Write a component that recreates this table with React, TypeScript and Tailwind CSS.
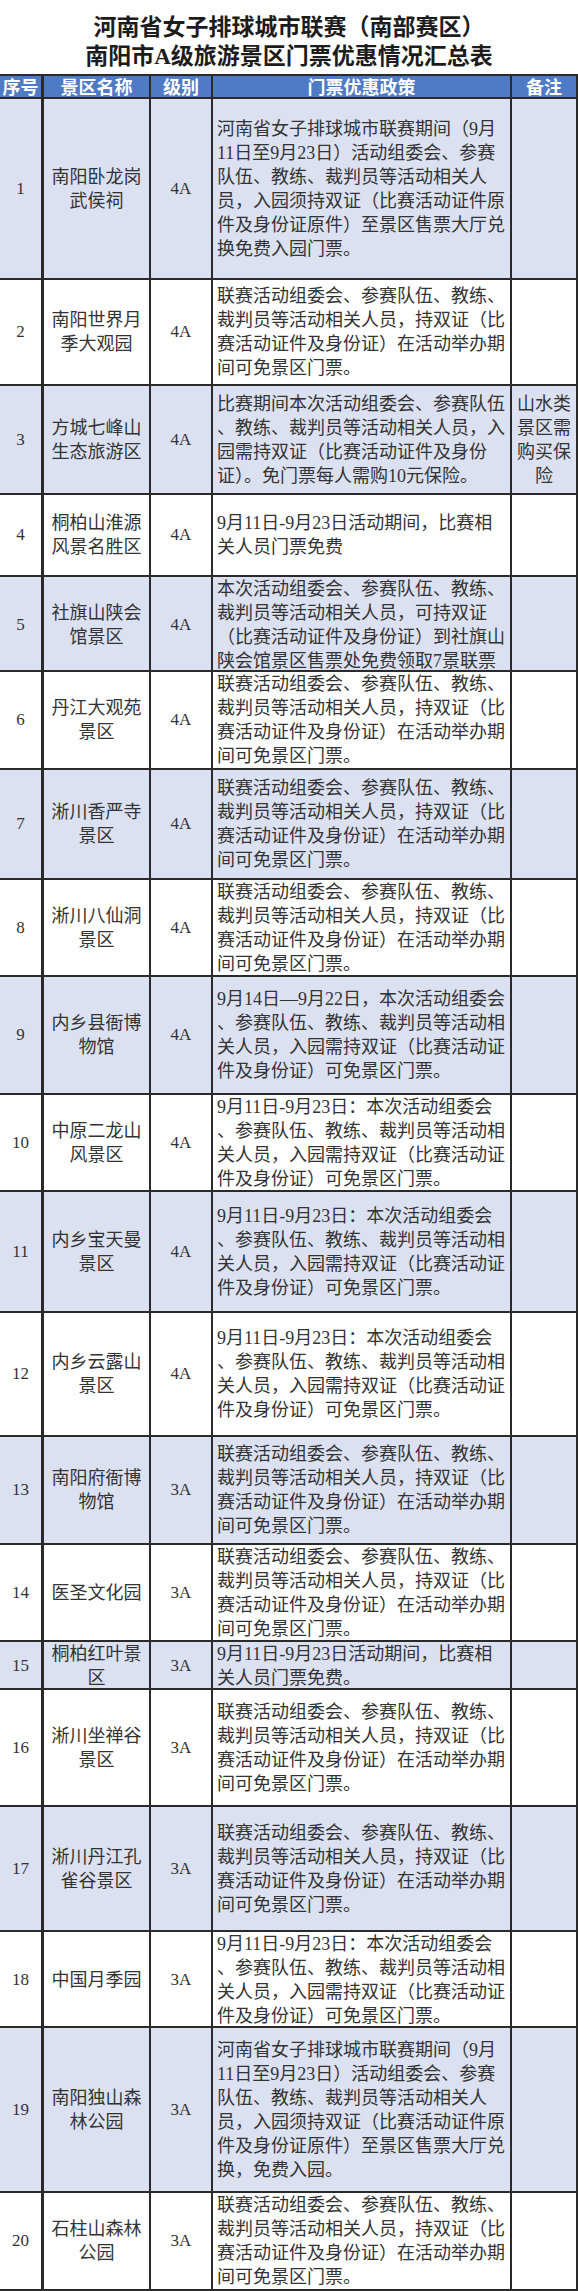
import React from 'react';

type Row = {
  no: number;
  name: string[];
  level: string;
  policy: string[];
  note?: string[];
  h: number;
};

const STD = [
  '联赛活动组委会、参赛队伍、教练、',
  '裁判员等活动相关人员，持双证（比',
  '赛活动证件及身份证）在活动举办期',
  '间可免景区门票。',
];

const D1123 = [
  '9月11日-9月23日：本次活动组委会',
  '、参赛队伍、教练、裁判员等活动相',
  '关人员，入园需持双证（比赛活动证',
  '件及身份证）可免景区门票。',
];

const LEAGUE = [
  '河南省女子排球城市联赛期间（9月',
  '11日至9月23日）活动组委会、参赛',
  '队伍、教练、裁判员等活动相关人',
  '员，入园须持双证（比赛活动证件原',
  '件及身份证原件）至景区售票大厅兑',
];

const rows: Row[] = [
  { no: 1, name: ['南阳卧龙岗', '武侯祠'], level: '4A', policy: [...LEAGUE, '换免费入园门票。'], h: 181 },
  { no: 2, name: ['南阳世界月', '季大观园'], level: '4A', policy: STD, h: 106 },
  {
    no: 3,
    name: ['方城七峰山', '生态旅游区'],
    level: '4A',
    policy: [
      '比赛期间本次活动组委会、参赛队伍',
      '、教练、裁判员等活动相关人员，入',
      '园需持双证（比赛活动证件及身份',
      '证）。免门票每人需购10元保险。',
    ],
    note: ['山水类', '景区需', '购买保', '险'],
    h: 109,
  },
  { no: 4, name: ['桐柏山淮源', '风景名胜区'], level: '4A', policy: ['9月11日-9月23日活动期间，比赛相', '关人员门票免费'], h: 82 },
  {
    no: 5,
    name: ['社旗山陕会', '馆景区'],
    level: '4A',
    policy: [
      '本次活动组委会、参赛队伍、教练、',
      '裁判员等活动相关人员，可持双证',
      '（比赛活动证件及身份证）到社旗山',
      '陕会馆景区售票处免费领取7景联票',
    ],
    h: 95,
  },
  { no: 6, name: ['丹江大观苑', '景区'], level: '4A', policy: STD, h: 98 },
  { no: 7, name: ['淅川香严寺', '景区'], level: '4A', policy: STD, h: 110 },
  { no: 8, name: ['淅川八仙洞', '景区'], level: '4A', policy: STD, h: 97 },
  {
    no: 9,
    name: ['内乡县衙博', '物馆'],
    level: '4A',
    policy: [
      '9月14日—9月22日，本次活动组委会',
      '、参赛队伍、教练、裁判员等活动相',
      '关人员，入园需持双证（比赛活动证',
      '件及身份证）可免景区门票。',
    ],
    h: 118,
  },
  { no: 10, name: ['中原二龙山', '风景区'], level: '4A', policy: D1123, h: 97 },
  { no: 11, name: ['内乡宝天曼', '景区'], level: '4A', policy: D1123, h: 121 },
  { no: 12, name: ['内乡云露山', '景区'], level: '4A', policy: D1123, h: 124 },
  { no: 13, name: ['南阳府衙博', '物馆'], level: '3A', policy: STD, h: 108 },
  { no: 14, name: ['医圣文化园'], level: '3A', policy: STD, h: 97 },
  { no: 15, name: ['桐柏红叶景', '区'], level: '3A', policy: ['9月11日-9月23日活动期间，比赛相', '关人员门票免费。'], h: 48 },
  { no: 16, name: ['淅川坐禅谷', '景区'], level: '3A', policy: STD, h: 117 },
  { no: 17, name: ['淅川丹江孔', '雀谷景区'], level: '3A', policy: STD, h: 125 },
  { no: 18, name: ['中国月季园'], level: '3A', policy: D1123, h: 96 },
  { no: 19, name: ['南阳独山森', '林公园'], level: '3A', policy: [...LEAGUE, '换，免费入园。'], h: 165 },
  { no: 20, name: ['石柱山森林', '公园'], level: '3A', policy: STD, h: 98 },
];

const font = "font-['Liberation_Serif','Noto_Sans_CJK_SC',serif]";
const cols = 'grid grid-cols-[44px_107px_62px_299px_66px]';
const cell = 'flex flex-col justify-center border-r-2 border-[#2a2a2a]';

function Lines({ lines, center }: { lines: string[]; center?: boolean }) {
  return (
    <>
      {lines.map((l, i) => (
        <div key={i} className={`whitespace-nowrap ${center ? 'text-center' : 'text-left'}`}>
          {l}
        </div>
      ))}
    </>
  );
}

export default function App() {
  return (
    <div className="w-[578px] bg-white">
      <div className={`h-[74px] pt-[13px] text-center ${font} text-[23px] leading-[29px] font-bold text-[#1c1c1c]`}>
        <div>河南省女子排球城市联赛（南部赛区）</div>
        <div>南阳市A级旅游景区门票优惠情况汇总表</div>
      </div>

      <div className={`${cols} h-[25px] border-y-2 border-[#2a2a2a] bg-[#4f7ac6] font-['Noto_Sans_CJK_SC',sans-serif] text-[18px] leading-[21px] font-bold text-white`}>
        <div className={`${cell} items-center border-r-[3px]`}>序号</div>
        <div className={`${cell} items-center`}>景区名称</div>
        <div className={`${cell} items-center`}>级别</div>
        <div className={`${cell} items-center`}>门票优惠政策</div>
        <div className={`${cell} items-center`}>备注</div>
      </div>

      {rows.map((r) => (
        <div
          key={r.no}
          style={{ height: r.h }}
          className={`${cols} border-b-2 border-[#2a2a2a] ${font} text-[18px] leading-[24px] text-[#333] ${
            r.no % 2 === 1 ? 'bg-[#dbe1f1]' : 'bg-white'
          }`}
        >
          <div className={`${cell} items-center border-r-[3px] text-[17px]`}>{r.no}</div>
          <div className={`${cell} items-center`}>
            <Lines lines={r.name} center />
          </div>
          <div className={`${cell} items-center text-[17px]`}>{r.level}</div>
          <div className={`${cell} pl-[4px]`}>
            <Lines lines={r.policy} />
          </div>
          <div className={`${cell} items-center`}>{r.note && <Lines lines={r.note} center />}</div>
        </div>
      ))}
    </div>
  );
}
